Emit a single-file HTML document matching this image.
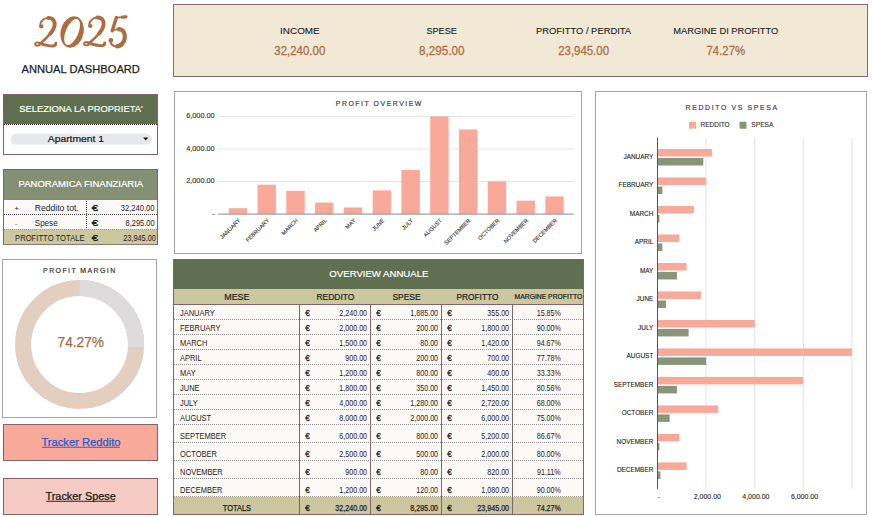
<!DOCTYPE html>
<html><head><meta charset="utf-8"><style>
html,body{margin:0;padding:0;width:873px;height:517px;overflow:hidden;background:#fff}
svg{display:block}
</style></head><body>
<svg width="873" height="517" viewBox="0 0 873 517">
<g id="two" fill="none" stroke="#ac6d3f" stroke-linecap="round" stroke-linejoin="round">
  <circle cx="41.4" cy="26.4" r="2.1" fill="#ac6d3f" stroke="none"/>
  <path d="M40.3 26.8 C39.6 21.8 43.5 17.9 48.3 17.9" stroke-width="1.9"/>
  <path d="M48.3 17.9 C53 17.9 55 21 54.6 25 C54.3 28 52.5 31 50 34" stroke-width="3.9"/>
  <path d="M50.5 33.4 C47.5 37 45 39.5 41 43" stroke-width="2.6"/>
  <ellipse cx="37.4" cy="44.1" rx="2.3" ry="1.7" stroke-width="1.9"/>
  <path d="M39.5 43.4 C44 44.8 49 46.3 53 46 C54.8 45.8 55.8 44.8 55.8 43.3" stroke-width="2.9"/>
</g>
<ellipse cx="72.1" cy="32" rx="11.4" ry="15.9" transform="rotate(14 72.1 32)" fill="#ac6d3f"/>
<ellipse cx="72.1" cy="32" rx="6.3" ry="13.9" transform="rotate(23 72.1 32)" fill="#fff"/>
<use href="#two" transform="translate(49 -0.4)"/>
<g fill="none" stroke="#ac6d3f" stroke-linecap="round" stroke-linejoin="round">
  <path d="M116.5 17.6 C119 17.4 121 17.3 123 17.1" stroke-width="1.9"/>
  <path d="M122.5 17.2 L126 16.8" stroke-width="3.2"/>
  <path d="M116.4 17.6 L112.2 30.8" stroke-width="3.4"/>
  <path d="M112.2 30.8 C114.5 29.5 117 29 119 29.2" stroke-width="1.6"/>
  <path d="M119 29.2 C123.5 29.8 125.2 33.5 124.8 37.5 C124.3 42.5 121 46.3 116.8 46.3" stroke-width="4.2"/>
  <path d="M116.8 46.3 C113.5 46.3 110.8 44.5 110.5 41" stroke-width="2.2"/>
  <circle cx="110.9" cy="40.2" r="2.3" fill="#ac6d3f" stroke="none"/>
</g>
<text x="21.60" y="73.1" font-family="Liberation Sans" font-size="10.6" font-weight="normal" font-style="normal" fill="#1e1e1e" textLength="118.29" lengthAdjust="spacingAndGlyphs" stroke="#1e1e1e" stroke-width="0.25">ANNUAL DASHBOARD</text>
<rect x="3.5" y="94.5" width="154" height="60" fill="#fff" stroke="#80646a" stroke-width="1"/>
<rect x="4" y="95" width="153" height="29" fill="#5e6e4e"/>
<line x1="4" y1="124.5" x2="157" y2="124.5" stroke="#2a2a2a" stroke-width="1" stroke-dasharray="1 1"/>
<text x="19.25" y="111.7" font-family="Liberation Sans" font-size="9.7" font-weight="normal" font-style="normal" fill="#fff" textLength="123.49" lengthAdjust="spacingAndGlyphs" stroke="#fff" stroke-width="0.2">SELEZIONA LA PROPRIETA'</text>
<rect x="10.5" y="133.8" width="141.5" height="10.8" fill="#e7e8eb" rx="5.4"/>
<text x="47.78" y="141.8" font-family="Liberation Sans" font-size="9.2" font-weight="normal" font-style="normal" fill="#141414" textLength="56.23" lengthAdjust="spacingAndGlyphs" stroke="#141414" stroke-width="0.2">Apartment 1</text>
<path d="M143.2 137.6 L148.2 137.6 L145.7 140.4 Z" fill="#111"/>
<rect x="3.5" y="169.5" width="154" height="75" fill="#fdf9f7" stroke="#80646a" stroke-width="1"/>
<rect x="4" y="170" width="153" height="29" fill="#858f73"/>
<line x1="4" y1="199.5" x2="157" y2="199.5" stroke="#9c7c82" stroke-width="1"/>
<text x="18.57" y="187" font-family="Liberation Sans" font-size="9.5" font-weight="normal" font-style="normal" fill="#fff" textLength="124.67" lengthAdjust="spacingAndGlyphs" stroke="#fff" stroke-width="0.2">PANORAMICA FINANZIARIA</text>
<line x1="4" y1="214.5" x2="157" y2="214.5" stroke="#444" stroke-width="1" stroke-dasharray="1 1"/>
<rect x="4" y="229.2" width="153" height="15" fill="#cdc79f"/>
<line x1="4" y1="229.5" x2="157" y2="229.5" stroke="#9c9880" stroke-width="1" stroke-dasharray="1 1"/>
<line x1="86.5" y1="201" x2="86.5" y2="229" stroke="#444" stroke-width="1" stroke-dasharray="1 1"/>
<text x="14.45" y="210.8" font-family="Liberation Sans" font-size="8" font-weight="normal" font-style="normal" fill="#222" textLength="4.40" lengthAdjust="spacingAndGlyphs">+</text>
<text x="34.74" y="210.9" font-family="Liberation Sans" font-size="8.2" font-weight="normal" font-style="normal" fill="#222" textLength="44.02" lengthAdjust="spacingAndGlyphs">Reddito tot.</text>
<text x="91.73" y="211.1" font-family="Liberation Sans" font-size="8.4" font-weight="normal" font-style="normal" fill="#222" textLength="6.34" lengthAdjust="spacingAndGlyphs" stroke="#222" stroke-width="0.35">€</text>
<text x="120.74" y="211.1" font-family="Liberation Sans" font-size="8.2" font-weight="normal" font-style="normal" fill="#222" textLength="33.82" lengthAdjust="spacingAndGlyphs">32,240.00</text>
<text x="14.55" y="225.5" font-family="Liberation Sans" font-size="8" font-weight="normal" font-style="normal" fill="#999" textLength="3.40" lengthAdjust="spacingAndGlyphs">-</text>
<text x="34.74" y="225.7" font-family="Liberation Sans" font-size="8.2" font-weight="normal" font-style="normal" fill="#222" textLength="22.92" lengthAdjust="spacingAndGlyphs">Spese</text>
<text x="91.73" y="225.9" font-family="Liberation Sans" font-size="8.4" font-weight="normal" font-style="normal" fill="#222" textLength="6.34" lengthAdjust="spacingAndGlyphs" stroke="#222" stroke-width="0.35">€</text>
<text x="125.54" y="225.9" font-family="Liberation Sans" font-size="8.2" font-weight="normal" font-style="normal" fill="#222" textLength="29.02" lengthAdjust="spacingAndGlyphs">8,295.00</text>
<text x="15.04" y="240.9" font-family="Liberation Sans" font-size="8.2" font-weight="normal" font-style="normal" fill="#222" textLength="69.62" lengthAdjust="spacingAndGlyphs">PROFITTO TOTALE</text>
<text x="91.73" y="240.7" font-family="Liberation Sans" font-size="8.4" font-weight="normal" font-style="normal" fill="#222" textLength="6.34" lengthAdjust="spacingAndGlyphs" stroke="#222" stroke-width="0.35">€</text>
<text x="123.24" y="240.7" font-family="Liberation Sans" font-size="8.2" font-weight="normal" font-style="normal" fill="#222" textLength="32.62" lengthAdjust="spacingAndGlyphs">23,945.00</text>
<rect x="2.5" y="259.5" width="154" height="158" fill="#fff" stroke="#a3a3a3" stroke-width="1"/>
<text x="43.11" y="272.9" font-family="Liberation Sans" font-size="6.9" font-weight="normal" font-style="normal" fill="#333" textLength="72.08" lengthAdjust="spacing" stroke="#333" stroke-width="0.2">PROFIT MARGIN</text>
<circle cx="79.6" cy="344.5" r="56.45" fill="none" stroke="#e3cfbf" stroke-width="16.1"/>
<circle cx="79.6" cy="344.5" r="56.45" fill="none" stroke="#dddbdc" stroke-width="16.1" stroke-dasharray="91.26 354.69" transform="rotate(-90 79.6 344.5)"/>
<text x="57.53" y="347.2" font-family="Liberation Sans" font-size="15.4" font-weight="normal" font-style="normal" fill="#a86c44" textLength="46.53" lengthAdjust="spacingAndGlyphs" stroke="#a86c44" stroke-width="0.25">74.27%</text>
<rect x="3.5" y="424.5" width="154" height="36" fill="#f8a99a" stroke="#80646a" stroke-width="1"/>
<text x="41.40" y="445.6" font-family="Liberation Sans" font-size="10.7" font-weight="normal" font-style="normal" fill="#1f5ad6" textLength="79.20" lengthAdjust="spacingAndGlyphs" stroke="#1f5ad6" stroke-width="0.25">Tracker Reddito</text>
<line x1="42" y1="447.3" x2="120" y2="447.3" stroke="#2a5bd0" stroke-width="0.9"/>
<rect x="3.5" y="478.5" width="154" height="36" fill="#f5cbc3" stroke="#80646a" stroke-width="1"/>
<text x="45.50" y="499.6" font-family="Liberation Sans" font-size="10.7" font-weight="normal" font-style="normal" fill="#1a1a1a" textLength="70.30" lengthAdjust="spacingAndGlyphs" stroke="#1a1a1a" stroke-width="0.25">Tracker Spese</text>
<line x1="46.1" y1="501.3" x2="115.2" y2="501.3" stroke="#1a1a1a" stroke-width="0.9"/>
<rect x="173.5" y="4.5" width="694" height="72" fill="#f1e8d6" stroke="#86696d" stroke-width="1"/>
<text x="280.07" y="33.9" font-family="Liberation Sans" font-size="9.5" font-weight="normal" font-style="normal" fill="#1a1a1a" textLength="39.67" lengthAdjust="spacingAndGlyphs" stroke="#1a1a1a" stroke-width="0.1">INCOME</text>
<text x="274.30" y="54.6" font-family="Liberation Sans" font-size="12.4" font-weight="normal" font-style="normal" fill="#ad7049" textLength="51.00" lengthAdjust="spacingAndGlyphs" stroke="#ad7049" stroke-width="0.3">32,240.00</text>
<text x="426.47" y="33.9" font-family="Liberation Sans" font-size="9.5" font-weight="normal" font-style="normal" fill="#1a1a1a" textLength="30.37" lengthAdjust="spacingAndGlyphs" stroke="#1a1a1a" stroke-width="0.1">SPESE</text>
<text x="419.10" y="54.6" font-family="Liberation Sans" font-size="12.4" font-weight="normal" font-style="normal" fill="#ad7049" textLength="45.40" lengthAdjust="spacingAndGlyphs" stroke="#ad7049" stroke-width="0.3">8,295.00</text>
<text x="535.97" y="33.9" font-family="Liberation Sans" font-size="9.5" font-weight="normal" font-style="normal" fill="#1a1a1a" textLength="95.17" lengthAdjust="spacingAndGlyphs" stroke="#1a1a1a" stroke-width="0.1">PROFITTO / PERDITA</text>
<text x="558.20" y="54.6" font-family="Liberation Sans" font-size="12.4" font-weight="normal" font-style="normal" fill="#ad7049" textLength="50.79" lengthAdjust="spacingAndGlyphs" stroke="#ad7049" stroke-width="0.3">23,945.00</text>
<text x="673.27" y="33.9" font-family="Liberation Sans" font-size="9.5" font-weight="normal" font-style="normal" fill="#1a1a1a" textLength="105.07" lengthAdjust="spacingAndGlyphs" stroke="#1a1a1a" stroke-width="0.1">MARGINE DI PROFITTO</text>
<text x="706.50" y="54.6" font-family="Liberation Sans" font-size="12.4" font-weight="normal" font-style="normal" fill="#ad7049" textLength="38.59" lengthAdjust="spacingAndGlyphs" stroke="#ad7049" stroke-width="0.3">74.27%</text>
<rect x="174.5" y="91.5" width="407" height="162" fill="#fff" stroke="#a3a3a3" stroke-width="1"/>
<text x="335.81" y="106" font-family="Liberation Sans" font-size="6.9" font-weight="normal" font-style="normal" fill="#444" textLength="85.58" lengthAdjust="spacing" stroke="#444" stroke-width="0.2">PROFIT OVERVIEW</text>
<line x1="218" y1="181.47" x2="573.5" y2="181.47" stroke="#e6e6e6" stroke-width="1"/>
<text x="186.31" y="183.17" font-family="Liberation Sans" font-size="7" font-weight="normal" font-style="normal" fill="#333" textLength="28.19" lengthAdjust="spacingAndGlyphs" stroke="#333" stroke-width="0.15">2,000.00</text>
<line x1="218" y1="148.93" x2="573.5" y2="148.93" stroke="#e6e6e6" stroke-width="1"/>
<text x="186.31" y="150.63" font-family="Liberation Sans" font-size="7" font-weight="normal" font-style="normal" fill="#333" textLength="28.19" lengthAdjust="spacingAndGlyphs" stroke="#333" stroke-width="0.15">4,000.00</text>
<line x1="218" y1="116.4" x2="573.5" y2="116.4" stroke="#e6e6e6" stroke-width="1"/>
<text x="186.31" y="118.1" font-family="Liberation Sans" font-size="7" font-weight="normal" font-style="normal" fill="#333" textLength="28.19" lengthAdjust="spacingAndGlyphs" stroke="#333" stroke-width="0.15">6,000.00</text>
<text x="212.11" y="215.5" font-family="Liberation Sans" font-size="7" font-weight="normal" font-style="normal" fill="#333" textLength="2.79" lengthAdjust="spacingAndGlyphs">-</text>
<rect x="228.75" y="208.23" width="18.4" height="5.77" fill="#f8a99a"/>
<text transform="translate(240.75,220.90) rotate(-45)" text-anchor="end" font-family="Liberation Sans" font-size="5.6" fill="#333" stroke="#333" stroke-width="0.12">JANUARY</text>
<rect x="257.53" y="184.72" width="18.4" height="29.28" fill="#f8a99a"/>
<text transform="translate(269.53,220.90) rotate(-45)" text-anchor="end" font-family="Liberation Sans" font-size="5.6" fill="#333" stroke="#333" stroke-width="0.12">FEBRUARY</text>
<rect x="286.31" y="190.9" width="18.4" height="23.1" fill="#f8a99a"/>
<text transform="translate(298.31,220.90) rotate(-45)" text-anchor="end" font-family="Liberation Sans" font-size="5.6" fill="#333" stroke="#333" stroke-width="0.12">MARCH</text>
<rect x="315.09" y="202.61" width="18.4" height="11.39" fill="#f8a99a"/>
<text transform="translate(327.09,220.90) rotate(-45)" text-anchor="end" font-family="Liberation Sans" font-size="5.6" fill="#333" stroke="#333" stroke-width="0.12">APRIL</text>
<rect x="343.87" y="207.49" width="18.4" height="6.51" fill="#f8a99a"/>
<text transform="translate(355.87,220.90) rotate(-45)" text-anchor="end" font-family="Liberation Sans" font-size="5.6" fill="#333" stroke="#333" stroke-width="0.12">MAY</text>
<rect x="372.65" y="190.41" width="18.4" height="23.59" fill="#f8a99a"/>
<text transform="translate(384.65,220.90) rotate(-45)" text-anchor="end" font-family="Liberation Sans" font-size="5.6" fill="#333" stroke="#333" stroke-width="0.12">JUNE</text>
<rect x="401.43" y="169.75" width="18.4" height="44.25" fill="#f8a99a"/>
<text transform="translate(413.43,220.90) rotate(-45)" text-anchor="end" font-family="Liberation Sans" font-size="5.6" fill="#333" stroke="#333" stroke-width="0.12">JULY</text>
<rect x="430.21" y="116.4" width="18.4" height="97.6" fill="#f8a99a"/>
<text transform="translate(442.21,220.90) rotate(-45)" text-anchor="end" font-family="Liberation Sans" font-size="5.6" fill="#333" stroke="#333" stroke-width="0.12">AUGUST</text>
<rect x="458.99" y="129.41" width="18.4" height="84.59" fill="#f8a99a"/>
<text transform="translate(470.99,220.90) rotate(-45)" text-anchor="end" font-family="Liberation Sans" font-size="5.6" fill="#333" stroke="#333" stroke-width="0.12">SEPTEMBER</text>
<rect x="487.77" y="181.47" width="18.4" height="32.53" fill="#f8a99a"/>
<text transform="translate(499.77,220.90) rotate(-45)" text-anchor="end" font-family="Liberation Sans" font-size="5.6" fill="#333" stroke="#333" stroke-width="0.12">OCTOBER</text>
<rect x="516.55" y="200.66" width="18.4" height="13.34" fill="#f8a99a"/>
<text transform="translate(528.55,220.90) rotate(-45)" text-anchor="end" font-family="Liberation Sans" font-size="5.6" fill="#333" stroke="#333" stroke-width="0.12">NOVEMBER</text>
<rect x="545.33" y="196.43" width="18.4" height="17.57" fill="#f8a99a"/>
<text transform="translate(557.33,220.90) rotate(-45)" text-anchor="end" font-family="Liberation Sans" font-size="5.6" fill="#333" stroke="#333" stroke-width="0.12">DECEMBER</text>
<line x1="218" y1="214.1" x2="573.5" y2="214.1" stroke="#a0a0a0" stroke-width="1.3"/>
<rect x="595.5" y="91.5" width="271" height="423" fill="#fff" stroke="#a3a3a3" stroke-width="1"/>
<text x="685.61" y="110" font-family="Liberation Sans" font-size="6.9" font-weight="normal" font-style="normal" fill="#444" textLength="91.48" lengthAdjust="spacing" stroke="#444" stroke-width="0.2">REDDITO VS SPESA</text>
<rect x="689" y="121.7" width="7" height="7" fill="#f8a99a"/>
<text x="700.51" y="127" font-family="Liberation Sans" font-size="7" font-weight="normal" font-style="normal" fill="#3a3a3a" textLength="29.19" lengthAdjust="spacingAndGlyphs" stroke="#3a3a3a" stroke-width="0.15">REDDITO</text>
<rect x="739.5" y="121.7" width="7" height="7" fill="#89957a"/>
<text x="751.31" y="127" font-family="Liberation Sans" font-size="7" font-weight="normal" font-style="normal" fill="#3a3a3a" textLength="22.09" lengthAdjust="spacingAndGlyphs" stroke="#3a3a3a" stroke-width="0.15">SPESA</text>
<line x1="706.1" y1="137.7" x2="706.1" y2="488.9" stroke="#e3e3e3" stroke-width="1"/>
<line x1="754.7" y1="137.7" x2="754.7" y2="488.9" stroke="#e3e3e3" stroke-width="1"/>
<line x1="803.3" y1="137.7" x2="803.3" y2="488.9" stroke="#e3e3e3" stroke-width="1"/>
<line x1="851.9" y1="137.7" x2="851.9" y2="488.9" stroke="#e3e3e3" stroke-width="1"/>
<text x="658.7" y="498.5" font-family="Liberation Sans" font-size="7" font-weight="normal" fill="#333" text-anchor="middle">-</text>
<text x="707.3" y="498.5" font-family="Liberation Sans" font-size="7" font-weight="normal" fill="#333" text-anchor="middle" stroke="#333" stroke-width="0.15">2,000.00</text>
<text x="755.9" y="498.5" font-family="Liberation Sans" font-size="7" font-weight="normal" fill="#333" text-anchor="middle" stroke="#333" stroke-width="0.15">4,000.00</text>
<text x="804.5" y="498.5" font-family="Liberation Sans" font-size="7" font-weight="normal" fill="#333" text-anchor="middle" stroke="#333" stroke-width="0.15">6,000.00</text>
<rect x="657.5" y="149.0" width="54.43" height="7.5" fill="#f8a99a"/>
<rect x="657.5" y="158.0" width="45.81" height="7.5" fill="#89957a"/>
<text x="653.3" y="159.00" font-family="Liberation Sans" font-size="7.2" fill="#222" stroke="#222" stroke-width="0.12" text-anchor="end" textLength="29.79" lengthAdjust="spacingAndGlyphs">JANUARY</text>
<rect x="657.5" y="177.49" width="48.6" height="7.5" fill="#f8a99a"/>
<rect x="657.5" y="186.49" width="4.86" height="7.5" fill="#89957a"/>
<text x="653.3" y="187.49" font-family="Liberation Sans" font-size="7.2" fill="#222" stroke="#222" stroke-width="0.12" text-anchor="end" textLength="34.78" lengthAdjust="spacingAndGlyphs">FEBRUARY</text>
<rect x="657.5" y="205.98" width="36.45" height="7.5" fill="#f8a99a"/>
<rect x="657.5" y="214.98" width="1.94" height="7.5" fill="#89957a"/>
<text x="653.3" y="215.98" font-family="Liberation Sans" font-size="7.2" fill="#222" stroke="#222" stroke-width="0.12" text-anchor="end" textLength="23.50" lengthAdjust="spacingAndGlyphs">MARCH</text>
<rect x="657.5" y="234.47" width="21.87" height="7.5" fill="#f8a99a"/>
<rect x="657.5" y="243.47" width="4.86" height="7.5" fill="#89957a"/>
<text x="653.3" y="244.47" font-family="Liberation Sans" font-size="7.2" fill="#222" stroke="#222" stroke-width="0.12" text-anchor="end" textLength="18.52" lengthAdjust="spacingAndGlyphs">APRIL</text>
<rect x="657.5" y="262.96" width="29.16" height="7.5" fill="#f8a99a"/>
<rect x="657.5" y="271.96" width="19.44" height="7.5" fill="#89957a"/>
<text x="653.3" y="272.96" font-family="Liberation Sans" font-size="7.2" fill="#222" stroke="#222" stroke-width="0.12" text-anchor="end" textLength="13.41" lengthAdjust="spacingAndGlyphs">MAY</text>
<rect x="657.5" y="291.45" width="43.74" height="7.5" fill="#f8a99a"/>
<rect x="657.5" y="300.45" width="8.51" height="7.5" fill="#89957a"/>
<text x="653.3" y="301.45" font-family="Liberation Sans" font-size="7.2" fill="#222" stroke="#222" stroke-width="0.12" text-anchor="end" textLength="16.73" lengthAdjust="spacingAndGlyphs">JUNE</text>
<rect x="657.5" y="319.94" width="97.2" height="7.5" fill="#f8a99a"/>
<rect x="657.5" y="328.94" width="31.1" height="7.5" fill="#89957a"/>
<text x="653.3" y="329.94" font-family="Liberation Sans" font-size="7.2" fill="#222" stroke="#222" stroke-width="0.12" text-anchor="end" textLength="15.19" lengthAdjust="spacingAndGlyphs">JULY</text>
<rect x="657.5" y="348.43" width="194.4" height="7.5" fill="#f8a99a"/>
<rect x="657.5" y="357.43" width="48.6" height="7.5" fill="#89957a"/>
<text x="653.3" y="358.43" font-family="Liberation Sans" font-size="7.2" fill="#222" stroke="#222" stroke-width="0.12" text-anchor="end" textLength="26.70" lengthAdjust="spacingAndGlyphs">AUGUST</text>
<rect x="657.5" y="376.92" width="145.8" height="7.5" fill="#f8a99a"/>
<rect x="657.5" y="385.92" width="19.44" height="7.5" fill="#89957a"/>
<text x="653.3" y="386.92" font-family="Liberation Sans" font-size="7.2" fill="#222" stroke="#222" stroke-width="0.12" text-anchor="end" textLength="39.53" lengthAdjust="spacingAndGlyphs">SEPTEMBER</text>
<rect x="657.5" y="405.41" width="60.75" height="7.5" fill="#f8a99a"/>
<rect x="657.5" y="414.41" width="12.15" height="7.5" fill="#89957a"/>
<text x="653.3" y="415.41" font-family="Liberation Sans" font-size="7.2" fill="#222" stroke="#222" stroke-width="0.12" text-anchor="end" textLength="31.57" lengthAdjust="spacingAndGlyphs">OCTOBER</text>
<rect x="657.5" y="433.9" width="21.87" height="7.5" fill="#f8a99a"/>
<rect x="657.5" y="442.9" width="1.94" height="7.5" fill="#89957a"/>
<text x="653.3" y="443.90" font-family="Liberation Sans" font-size="7.2" fill="#222" stroke="#222" stroke-width="0.12" text-anchor="end" textLength="36.68" lengthAdjust="spacingAndGlyphs">NOVEMBER</text>
<rect x="657.5" y="462.39" width="29.16" height="7.5" fill="#f8a99a"/>
<rect x="657.5" y="471.39" width="2.92" height="7.5" fill="#89957a"/>
<text x="653.3" y="472.39" font-family="Liberation Sans" font-size="7.2" fill="#222" stroke="#222" stroke-width="0.12" text-anchor="end" textLength="36.32" lengthAdjust="spacingAndGlyphs">DECEMBER</text>
<line x1="657.5" y1="137.7" x2="657.5" y2="488.9" stroke="#555" stroke-width="1"/>
<rect x="173.5" y="259.5" width="410" height="255" fill="#fdf9f7" stroke="#80646a" stroke-width="1"/>
<rect x="174" y="260" width="409" height="29" fill="#5f6f50"/>
<text x="329.35" y="276.8" font-family="Liberation Sans" font-size="9.8" font-weight="normal" font-style="normal" fill="#fff" textLength="99.10" lengthAdjust="spacingAndGlyphs" stroke="#fff" stroke-width="0.2">OVERVIEW ANNUALE</text>
<rect x="174" y="289" width="409" height="15.3" fill="#cdc79f"/>
<line x1="174" y1="304.5" x2="583" y2="304.5" stroke="#80646a" stroke-width="1"/>
<text x="224.33" y="299.6" font-family="Liberation Sans" font-size="8.4" font-weight="normal" font-style="normal" fill="#222" textLength="25.04" lengthAdjust="spacingAndGlyphs" stroke="#222" stroke-width="0.2">MESE</text>
<text x="316.43" y="299.8" font-family="Liberation Sans" font-size="8.4" font-weight="normal" font-style="normal" fill="#222" textLength="38.05" lengthAdjust="spacingAndGlyphs" stroke="#222" stroke-width="0.2">REDDITO</text>
<text x="392.53" y="299.8" font-family="Liberation Sans" font-size="8.4" font-weight="normal" font-style="normal" fill="#222" textLength="28.05" lengthAdjust="spacingAndGlyphs" stroke="#222" stroke-width="0.2">SPESE</text>
<text x="456.53" y="299.9" font-family="Liberation Sans" font-size="8.4" font-weight="normal" font-style="normal" fill="#222" textLength="41.84" lengthAdjust="spacingAndGlyphs" stroke="#222" stroke-width="0.2">PROFITTO</text>
<text x="514.64" y="299.1" font-family="Liberation Sans" font-size="6.4" font-weight="normal" font-style="normal" fill="#222" textLength="67.62" lengthAdjust="spacingAndGlyphs" stroke="#222" stroke-width="0.2">MARGINE PROFITTO</text>
<line x1="174" y1="319.5" x2="583" y2="319.5" stroke="#8c8c8c" stroke-width="1" stroke-dasharray="1 1"/>
<text x="180.00" y="315.9" font-family="Liberation Sans" font-size="8.3" font-weight="normal" fill="#222" text-anchor="start" textLength="34.73" lengthAdjust="spacingAndGlyphs">JANUARY</text>
<text x="305.20" y="315.9" font-family="Liberation Sans" font-size="8.3" font-weight="normal" fill="#222" text-anchor="start" textLength="4.62" lengthAdjust="spacingAndGlyphs" stroke="#222" stroke-width="0.3">€</text>
<text x="367.10" y="315.9" font-family="Liberation Sans" font-size="8.3" font-weight="normal" fill="#222" text-anchor="end" textLength="27.79" lengthAdjust="spacingAndGlyphs">2,240.00</text>
<text x="376.20" y="315.9" font-family="Liberation Sans" font-size="8.3" font-weight="normal" fill="#222" text-anchor="start" textLength="4.62" lengthAdjust="spacingAndGlyphs" stroke="#222" stroke-width="0.3">€</text>
<text x="438.10" y="315.9" font-family="Liberation Sans" font-size="8.3" font-weight="normal" fill="#222" text-anchor="end" textLength="27.79" lengthAdjust="spacingAndGlyphs">1,885.00</text>
<text x="447.20" y="315.9" font-family="Liberation Sans" font-size="8.3" font-weight="normal" fill="#222" text-anchor="start" textLength="4.62" lengthAdjust="spacingAndGlyphs" stroke="#222" stroke-width="0.3">€</text>
<text x="509.10" y="315.9" font-family="Liberation Sans" font-size="8.3" font-weight="normal" fill="#222" text-anchor="end" textLength="21.83" lengthAdjust="spacingAndGlyphs">355.00</text>
<text x="548.80" y="315.9" font-family="Liberation Sans" font-size="8.3" font-weight="normal" fill="#222" text-anchor="middle" textLength="24.21" lengthAdjust="spacingAndGlyphs">15.85%</text>
<line x1="174" y1="334.5" x2="583" y2="334.5" stroke="#8c8c8c" stroke-width="1" stroke-dasharray="1 1"/>
<text x="180.00" y="330.9" font-family="Liberation Sans" font-size="8.3" font-weight="normal" fill="#222" text-anchor="start" textLength="40.54" lengthAdjust="spacingAndGlyphs">FEBRUARY</text>
<text x="305.20" y="330.9" font-family="Liberation Sans" font-size="8.3" font-weight="normal" fill="#222" text-anchor="start" textLength="4.62" lengthAdjust="spacingAndGlyphs" stroke="#222" stroke-width="0.3">€</text>
<text x="367.10" y="330.9" font-family="Liberation Sans" font-size="8.3" font-weight="normal" fill="#222" text-anchor="end" textLength="27.79" lengthAdjust="spacingAndGlyphs">2,000.00</text>
<text x="376.20" y="330.9" font-family="Liberation Sans" font-size="8.3" font-weight="normal" fill="#222" text-anchor="start" textLength="4.62" lengthAdjust="spacingAndGlyphs" stroke="#222" stroke-width="0.3">€</text>
<text x="438.10" y="330.9" font-family="Liberation Sans" font-size="8.3" font-weight="normal" fill="#222" text-anchor="end" textLength="21.83" lengthAdjust="spacingAndGlyphs">200.00</text>
<text x="447.20" y="330.9" font-family="Liberation Sans" font-size="8.3" font-weight="normal" fill="#222" text-anchor="start" textLength="4.62" lengthAdjust="spacingAndGlyphs" stroke="#222" stroke-width="0.3">€</text>
<text x="509.10" y="330.9" font-family="Liberation Sans" font-size="8.3" font-weight="normal" fill="#222" text-anchor="end" textLength="27.79" lengthAdjust="spacingAndGlyphs">1,800.00</text>
<text x="548.80" y="330.9" font-family="Liberation Sans" font-size="8.3" font-weight="normal" fill="#222" text-anchor="middle" textLength="24.21" lengthAdjust="spacingAndGlyphs">90.00%</text>
<line x1="174" y1="349.5" x2="583" y2="349.5" stroke="#8c8c8c" stroke-width="1" stroke-dasharray="1 1"/>
<text x="180.00" y="345.9" font-family="Liberation Sans" font-size="8.3" font-weight="normal" fill="#222" text-anchor="start" textLength="27.39" lengthAdjust="spacingAndGlyphs">MARCH</text>
<text x="305.20" y="345.9" font-family="Liberation Sans" font-size="8.3" font-weight="normal" fill="#222" text-anchor="start" textLength="4.62" lengthAdjust="spacingAndGlyphs" stroke="#222" stroke-width="0.3">€</text>
<text x="367.10" y="345.9" font-family="Liberation Sans" font-size="8.3" font-weight="normal" fill="#222" text-anchor="end" textLength="27.79" lengthAdjust="spacingAndGlyphs">1,500.00</text>
<text x="376.20" y="345.9" font-family="Liberation Sans" font-size="8.3" font-weight="normal" fill="#222" text-anchor="start" textLength="4.62" lengthAdjust="spacingAndGlyphs" stroke="#222" stroke-width="0.3">€</text>
<text x="438.10" y="345.9" font-family="Liberation Sans" font-size="8.3" font-weight="normal" fill="#222" text-anchor="end" textLength="17.86" lengthAdjust="spacingAndGlyphs">80.00</text>
<text x="447.20" y="345.9" font-family="Liberation Sans" font-size="8.3" font-weight="normal" fill="#222" text-anchor="start" textLength="4.62" lengthAdjust="spacingAndGlyphs" stroke="#222" stroke-width="0.3">€</text>
<text x="509.10" y="345.9" font-family="Liberation Sans" font-size="8.3" font-weight="normal" fill="#222" text-anchor="end" textLength="27.79" lengthAdjust="spacingAndGlyphs">1,420.00</text>
<text x="548.80" y="345.9" font-family="Liberation Sans" font-size="8.3" font-weight="normal" fill="#222" text-anchor="middle" textLength="24.21" lengthAdjust="spacingAndGlyphs">94.67%</text>
<line x1="174" y1="364.5" x2="583" y2="364.5" stroke="#8c8c8c" stroke-width="1" stroke-dasharray="1 1"/>
<text x="180.00" y="360.9" font-family="Liberation Sans" font-size="8.3" font-weight="normal" fill="#222" text-anchor="start" textLength="21.59" lengthAdjust="spacingAndGlyphs">APRIL</text>
<text x="305.20" y="360.9" font-family="Liberation Sans" font-size="8.3" font-weight="normal" fill="#222" text-anchor="start" textLength="4.62" lengthAdjust="spacingAndGlyphs" stroke="#222" stroke-width="0.3">€</text>
<text x="367.10" y="360.9" font-family="Liberation Sans" font-size="8.3" font-weight="normal" fill="#222" text-anchor="end" textLength="21.83" lengthAdjust="spacingAndGlyphs">900.00</text>
<text x="376.20" y="360.9" font-family="Liberation Sans" font-size="8.3" font-weight="normal" fill="#222" text-anchor="start" textLength="4.62" lengthAdjust="spacingAndGlyphs" stroke="#222" stroke-width="0.3">€</text>
<text x="438.10" y="360.9" font-family="Liberation Sans" font-size="8.3" font-weight="normal" fill="#222" text-anchor="end" textLength="21.83" lengthAdjust="spacingAndGlyphs">200.00</text>
<text x="447.20" y="360.9" font-family="Liberation Sans" font-size="8.3" font-weight="normal" fill="#222" text-anchor="start" textLength="4.62" lengthAdjust="spacingAndGlyphs" stroke="#222" stroke-width="0.3">€</text>
<text x="509.10" y="360.9" font-family="Liberation Sans" font-size="8.3" font-weight="normal" fill="#222" text-anchor="end" textLength="21.83" lengthAdjust="spacingAndGlyphs">700.00</text>
<text x="548.80" y="360.9" font-family="Liberation Sans" font-size="8.3" font-weight="normal" fill="#222" text-anchor="middle" textLength="24.21" lengthAdjust="spacingAndGlyphs">77.78%</text>
<line x1="174" y1="379.5" x2="583" y2="379.5" stroke="#8c8c8c" stroke-width="1" stroke-dasharray="1 1"/>
<text x="180.00" y="375.9" font-family="Liberation Sans" font-size="8.3" font-weight="normal" fill="#222" text-anchor="start" textLength="15.63" lengthAdjust="spacingAndGlyphs">MAY</text>
<text x="305.20" y="375.9" font-family="Liberation Sans" font-size="8.3" font-weight="normal" fill="#222" text-anchor="start" textLength="4.62" lengthAdjust="spacingAndGlyphs" stroke="#222" stroke-width="0.3">€</text>
<text x="367.10" y="375.9" font-family="Liberation Sans" font-size="8.3" font-weight="normal" fill="#222" text-anchor="end" textLength="27.79" lengthAdjust="spacingAndGlyphs">1,200.00</text>
<text x="376.20" y="375.9" font-family="Liberation Sans" font-size="8.3" font-weight="normal" fill="#222" text-anchor="start" textLength="4.62" lengthAdjust="spacingAndGlyphs" stroke="#222" stroke-width="0.3">€</text>
<text x="438.10" y="375.9" font-family="Liberation Sans" font-size="8.3" font-weight="normal" fill="#222" text-anchor="end" textLength="21.83" lengthAdjust="spacingAndGlyphs">800.00</text>
<text x="447.20" y="375.9" font-family="Liberation Sans" font-size="8.3" font-weight="normal" fill="#222" text-anchor="start" textLength="4.62" lengthAdjust="spacingAndGlyphs" stroke="#222" stroke-width="0.3">€</text>
<text x="509.10" y="375.9" font-family="Liberation Sans" font-size="8.3" font-weight="normal" fill="#222" text-anchor="end" textLength="21.83" lengthAdjust="spacingAndGlyphs">400.00</text>
<text x="548.80" y="375.9" font-family="Liberation Sans" font-size="8.3" font-weight="normal" fill="#222" text-anchor="middle" textLength="24.21" lengthAdjust="spacingAndGlyphs">33.33%</text>
<line x1="174" y1="394.5" x2="583" y2="394.5" stroke="#8c8c8c" stroke-width="1" stroke-dasharray="1 1"/>
<text x="180.00" y="390.9" font-family="Liberation Sans" font-size="8.3" font-weight="normal" fill="#222" text-anchor="start" textLength="19.51" lengthAdjust="spacingAndGlyphs">JUNE</text>
<text x="305.20" y="390.9" font-family="Liberation Sans" font-size="8.3" font-weight="normal" fill="#222" text-anchor="start" textLength="4.62" lengthAdjust="spacingAndGlyphs" stroke="#222" stroke-width="0.3">€</text>
<text x="367.10" y="390.9" font-family="Liberation Sans" font-size="8.3" font-weight="normal" fill="#222" text-anchor="end" textLength="27.79" lengthAdjust="spacingAndGlyphs">1,800.00</text>
<text x="376.20" y="390.9" font-family="Liberation Sans" font-size="8.3" font-weight="normal" fill="#222" text-anchor="start" textLength="4.62" lengthAdjust="spacingAndGlyphs" stroke="#222" stroke-width="0.3">€</text>
<text x="438.10" y="390.9" font-family="Liberation Sans" font-size="8.3" font-weight="normal" fill="#222" text-anchor="end" textLength="21.83" lengthAdjust="spacingAndGlyphs">350.00</text>
<text x="447.20" y="390.9" font-family="Liberation Sans" font-size="8.3" font-weight="normal" fill="#222" text-anchor="start" textLength="4.62" lengthAdjust="spacingAndGlyphs" stroke="#222" stroke-width="0.3">€</text>
<text x="509.10" y="390.9" font-family="Liberation Sans" font-size="8.3" font-weight="normal" fill="#222" text-anchor="end" textLength="27.79" lengthAdjust="spacingAndGlyphs">1,450.00</text>
<text x="548.80" y="390.9" font-family="Liberation Sans" font-size="8.3" font-weight="normal" fill="#222" text-anchor="middle" textLength="24.21" lengthAdjust="spacingAndGlyphs">80.56%</text>
<line x1="174" y1="409.5" x2="583" y2="409.5" stroke="#8c8c8c" stroke-width="1" stroke-dasharray="1 1"/>
<text x="180.00" y="405.9" font-family="Liberation Sans" font-size="8.3" font-weight="normal" fill="#222" text-anchor="start" textLength="17.71" lengthAdjust="spacingAndGlyphs">JULY</text>
<text x="305.20" y="405.9" font-family="Liberation Sans" font-size="8.3" font-weight="normal" fill="#222" text-anchor="start" textLength="4.62" lengthAdjust="spacingAndGlyphs" stroke="#222" stroke-width="0.3">€</text>
<text x="367.10" y="405.9" font-family="Liberation Sans" font-size="8.3" font-weight="normal" fill="#222" text-anchor="end" textLength="27.79" lengthAdjust="spacingAndGlyphs">4,000.00</text>
<text x="376.20" y="405.9" font-family="Liberation Sans" font-size="8.3" font-weight="normal" fill="#222" text-anchor="start" textLength="4.62" lengthAdjust="spacingAndGlyphs" stroke="#222" stroke-width="0.3">€</text>
<text x="438.10" y="405.9" font-family="Liberation Sans" font-size="8.3" font-weight="normal" fill="#222" text-anchor="end" textLength="27.79" lengthAdjust="spacingAndGlyphs">1,280.00</text>
<text x="447.20" y="405.9" font-family="Liberation Sans" font-size="8.3" font-weight="normal" fill="#222" text-anchor="start" textLength="4.62" lengthAdjust="spacingAndGlyphs" stroke="#222" stroke-width="0.3">€</text>
<text x="509.10" y="405.9" font-family="Liberation Sans" font-size="8.3" font-weight="normal" fill="#222" text-anchor="end" textLength="27.79" lengthAdjust="spacingAndGlyphs">2,720.00</text>
<text x="548.80" y="405.9" font-family="Liberation Sans" font-size="8.3" font-weight="normal" fill="#222" text-anchor="middle" textLength="24.21" lengthAdjust="spacingAndGlyphs">68.00%</text>
<line x1="174" y1="424.5" x2="583" y2="424.5" stroke="#8c8c8c" stroke-width="1" stroke-dasharray="1 1"/>
<text x="180.00" y="420.9" font-family="Liberation Sans" font-size="8.3" font-weight="normal" fill="#222" text-anchor="start" textLength="31.13" lengthAdjust="spacingAndGlyphs">AUGUST</text>
<text x="305.20" y="420.9" font-family="Liberation Sans" font-size="8.3" font-weight="normal" fill="#222" text-anchor="start" textLength="4.62" lengthAdjust="spacingAndGlyphs" stroke="#222" stroke-width="0.3">€</text>
<text x="367.10" y="420.9" font-family="Liberation Sans" font-size="8.3" font-weight="normal" fill="#222" text-anchor="end" textLength="27.79" lengthAdjust="spacingAndGlyphs">8,000.00</text>
<text x="376.20" y="420.9" font-family="Liberation Sans" font-size="8.3" font-weight="normal" fill="#222" text-anchor="start" textLength="4.62" lengthAdjust="spacingAndGlyphs" stroke="#222" stroke-width="0.3">€</text>
<text x="438.10" y="420.9" font-family="Liberation Sans" font-size="8.3" font-weight="normal" fill="#222" text-anchor="end" textLength="27.79" lengthAdjust="spacingAndGlyphs">2,000.00</text>
<text x="447.20" y="420.9" font-family="Liberation Sans" font-size="8.3" font-weight="normal" fill="#222" text-anchor="start" textLength="4.62" lengthAdjust="spacingAndGlyphs" stroke="#222" stroke-width="0.3">€</text>
<text x="509.10" y="420.9" font-family="Liberation Sans" font-size="8.3" font-weight="normal" fill="#222" text-anchor="end" textLength="27.79" lengthAdjust="spacingAndGlyphs">6,000.00</text>
<text x="548.80" y="420.9" font-family="Liberation Sans" font-size="8.3" font-weight="normal" fill="#222" text-anchor="middle" textLength="24.21" lengthAdjust="spacingAndGlyphs">75.00%</text>
<line x1="174" y1="442.5" x2="583" y2="442.5" stroke="#8c8c8c" stroke-width="1" stroke-dasharray="1 1"/>
<text x="180.00" y="438.9" font-family="Liberation Sans" font-size="8.3" font-weight="normal" fill="#222" text-anchor="start" textLength="46.08" lengthAdjust="spacingAndGlyphs">SEPTEMBER</text>
<text x="305.20" y="438.9" font-family="Liberation Sans" font-size="8.3" font-weight="normal" fill="#222" text-anchor="start" textLength="4.62" lengthAdjust="spacingAndGlyphs" stroke="#222" stroke-width="0.3">€</text>
<text x="367.10" y="438.9" font-family="Liberation Sans" font-size="8.3" font-weight="normal" fill="#222" text-anchor="end" textLength="27.79" lengthAdjust="spacingAndGlyphs">6,000.00</text>
<text x="376.20" y="438.9" font-family="Liberation Sans" font-size="8.3" font-weight="normal" fill="#222" text-anchor="start" textLength="4.62" lengthAdjust="spacingAndGlyphs" stroke="#222" stroke-width="0.3">€</text>
<text x="438.10" y="438.9" font-family="Liberation Sans" font-size="8.3" font-weight="normal" fill="#222" text-anchor="end" textLength="21.83" lengthAdjust="spacingAndGlyphs">800.00</text>
<text x="447.20" y="438.9" font-family="Liberation Sans" font-size="8.3" font-weight="normal" fill="#222" text-anchor="start" textLength="4.62" lengthAdjust="spacingAndGlyphs" stroke="#222" stroke-width="0.3">€</text>
<text x="509.10" y="438.9" font-family="Liberation Sans" font-size="8.3" font-weight="normal" fill="#222" text-anchor="end" textLength="27.79" lengthAdjust="spacingAndGlyphs">5,200.00</text>
<text x="548.80" y="438.9" font-family="Liberation Sans" font-size="8.3" font-weight="normal" fill="#222" text-anchor="middle" textLength="24.21" lengthAdjust="spacingAndGlyphs">86.67%</text>
<line x1="174" y1="460.5" x2="583" y2="460.5" stroke="#8c8c8c" stroke-width="1" stroke-dasharray="1 1"/>
<text x="180.00" y="456.9" font-family="Liberation Sans" font-size="8.3" font-weight="normal" fill="#222" text-anchor="start" textLength="36.80" lengthAdjust="spacingAndGlyphs">OCTOBER</text>
<text x="305.20" y="456.9" font-family="Liberation Sans" font-size="8.3" font-weight="normal" fill="#222" text-anchor="start" textLength="4.62" lengthAdjust="spacingAndGlyphs" stroke="#222" stroke-width="0.3">€</text>
<text x="367.10" y="456.9" font-family="Liberation Sans" font-size="8.3" font-weight="normal" fill="#222" text-anchor="end" textLength="27.79" lengthAdjust="spacingAndGlyphs">2,500.00</text>
<text x="376.20" y="456.9" font-family="Liberation Sans" font-size="8.3" font-weight="normal" fill="#222" text-anchor="start" textLength="4.62" lengthAdjust="spacingAndGlyphs" stroke="#222" stroke-width="0.3">€</text>
<text x="438.10" y="456.9" font-family="Liberation Sans" font-size="8.3" font-weight="normal" fill="#222" text-anchor="end" textLength="21.83" lengthAdjust="spacingAndGlyphs">500.00</text>
<text x="447.20" y="456.9" font-family="Liberation Sans" font-size="8.3" font-weight="normal" fill="#222" text-anchor="start" textLength="4.62" lengthAdjust="spacingAndGlyphs" stroke="#222" stroke-width="0.3">€</text>
<text x="509.10" y="456.9" font-family="Liberation Sans" font-size="8.3" font-weight="normal" fill="#222" text-anchor="end" textLength="27.79" lengthAdjust="spacingAndGlyphs">2,000.00</text>
<text x="548.80" y="456.9" font-family="Liberation Sans" font-size="8.3" font-weight="normal" fill="#222" text-anchor="middle" textLength="24.21" lengthAdjust="spacingAndGlyphs">80.00%</text>
<line x1="174" y1="478.5" x2="583" y2="478.5" stroke="#8c8c8c" stroke-width="1" stroke-dasharray="1 1"/>
<text x="180.00" y="474.9" font-family="Liberation Sans" font-size="8.3" font-weight="normal" fill="#222" text-anchor="start" textLength="42.75" lengthAdjust="spacingAndGlyphs">NOVEMBER</text>
<text x="305.20" y="474.9" font-family="Liberation Sans" font-size="8.3" font-weight="normal" fill="#222" text-anchor="start" textLength="4.62" lengthAdjust="spacingAndGlyphs" stroke="#222" stroke-width="0.3">€</text>
<text x="367.10" y="474.9" font-family="Liberation Sans" font-size="8.3" font-weight="normal" fill="#222" text-anchor="end" textLength="21.83" lengthAdjust="spacingAndGlyphs">900.00</text>
<text x="376.20" y="474.9" font-family="Liberation Sans" font-size="8.3" font-weight="normal" fill="#222" text-anchor="start" textLength="4.62" lengthAdjust="spacingAndGlyphs" stroke="#222" stroke-width="0.3">€</text>
<text x="438.10" y="474.9" font-family="Liberation Sans" font-size="8.3" font-weight="normal" fill="#222" text-anchor="end" textLength="17.86" lengthAdjust="spacingAndGlyphs">80.00</text>
<text x="447.20" y="474.9" font-family="Liberation Sans" font-size="8.3" font-weight="normal" fill="#222" text-anchor="start" textLength="4.62" lengthAdjust="spacingAndGlyphs" stroke="#222" stroke-width="0.3">€</text>
<text x="509.10" y="474.9" font-family="Liberation Sans" font-size="8.3" font-weight="normal" fill="#222" text-anchor="end" textLength="21.83" lengthAdjust="spacingAndGlyphs">820.00</text>
<text x="548.80" y="474.9" font-family="Liberation Sans" font-size="8.3" font-weight="normal" fill="#222" text-anchor="middle" textLength="23.68" lengthAdjust="spacingAndGlyphs">91.11%</text>
<text x="180.00" y="492.9" font-family="Liberation Sans" font-size="8.3" font-weight="normal" fill="#222" text-anchor="start" textLength="42.34" lengthAdjust="spacingAndGlyphs">DECEMBER</text>
<text x="305.20" y="492.9" font-family="Liberation Sans" font-size="8.3" font-weight="normal" fill="#222" text-anchor="start" textLength="4.62" lengthAdjust="spacingAndGlyphs" stroke="#222" stroke-width="0.3">€</text>
<text x="367.10" y="492.9" font-family="Liberation Sans" font-size="8.3" font-weight="normal" fill="#222" text-anchor="end" textLength="27.79" lengthAdjust="spacingAndGlyphs">1,200.00</text>
<text x="376.20" y="492.9" font-family="Liberation Sans" font-size="8.3" font-weight="normal" fill="#222" text-anchor="start" textLength="4.62" lengthAdjust="spacingAndGlyphs" stroke="#222" stroke-width="0.3">€</text>
<text x="438.10" y="492.9" font-family="Liberation Sans" font-size="8.3" font-weight="normal" fill="#222" text-anchor="end" textLength="21.83" lengthAdjust="spacingAndGlyphs">120.00</text>
<text x="447.20" y="492.9" font-family="Liberation Sans" font-size="8.3" font-weight="normal" fill="#222" text-anchor="start" textLength="4.62" lengthAdjust="spacingAndGlyphs" stroke="#222" stroke-width="0.3">€</text>
<text x="509.10" y="492.9" font-family="Liberation Sans" font-size="8.3" font-weight="normal" fill="#222" text-anchor="end" textLength="27.79" lengthAdjust="spacingAndGlyphs">1,080.00</text>
<text x="548.80" y="492.9" font-family="Liberation Sans" font-size="8.3" font-weight="normal" fill="#222" text-anchor="middle" textLength="24.21" lengthAdjust="spacingAndGlyphs">90.00%</text>
<rect x="174" y="497" width="409" height="17" fill="#cdc79f"/>
<line x1="174" y1="496.5" x2="583" y2="496.5" stroke="#a09c88" stroke-width="1" stroke-dasharray="1 1"/>
<text x="236.90" y="510.8" font-family="Liberation Sans" font-size="8.3" font-weight="normal" fill="#222" text-anchor="middle" textLength="28.37" lengthAdjust="spacingAndGlyphs" stroke="#222" stroke-width="0.25">TOTALS</text>
<text x="305.20" y="510.8" font-family="Liberation Sans" font-size="8.3" font-weight="normal" fill="#222" text-anchor="start" textLength="4.62" lengthAdjust="spacingAndGlyphs" stroke="#222" stroke-width="0.35">€</text>
<text x="367.10" y="510.8" font-family="Liberation Sans" font-size="8.3" font-weight="normal" fill="#222" text-anchor="end" textLength="31.76" lengthAdjust="spacingAndGlyphs" stroke="#222" stroke-width="0.25">32,240.00</text>
<text x="376.20" y="510.8" font-family="Liberation Sans" font-size="8.3" font-weight="normal" fill="#222" text-anchor="start" textLength="4.62" lengthAdjust="spacingAndGlyphs" stroke="#222" stroke-width="0.35">€</text>
<text x="438.10" y="510.8" font-family="Liberation Sans" font-size="8.3" font-weight="normal" fill="#222" text-anchor="end" textLength="27.79" lengthAdjust="spacingAndGlyphs" stroke="#222" stroke-width="0.25">8,295.00</text>
<text x="447.20" y="510.8" font-family="Liberation Sans" font-size="8.3" font-weight="normal" fill="#222" text-anchor="start" textLength="4.62" lengthAdjust="spacingAndGlyphs" stroke="#222" stroke-width="0.35">€</text>
<text x="509.10" y="510.8" font-family="Liberation Sans" font-size="8.3" font-weight="normal" fill="#222" text-anchor="end" textLength="31.76" lengthAdjust="spacingAndGlyphs" stroke="#222" stroke-width="0.25">23,945.00</text>
<text x="548.80" y="510.8" font-family="Liberation Sans" font-size="8.3" font-weight="normal" fill="#222" text-anchor="middle" textLength="24.21" lengthAdjust="spacingAndGlyphs" stroke="#222" stroke-width="0.25">74.27%</text>
<line x1="299.5" y1="305" x2="299.5" y2="514" stroke="#80646a" stroke-width="1"/>
<line x1="370.5" y1="305" x2="370.5" y2="514" stroke="#80646a" stroke-width="1"/>
<line x1="441.5" y1="305" x2="441.5" y2="514" stroke="#80646a" stroke-width="1"/>
<line x1="512.5" y1="305" x2="512.5" y2="514" stroke="#80646a" stroke-width="1"/>
</svg>
</body></html>
